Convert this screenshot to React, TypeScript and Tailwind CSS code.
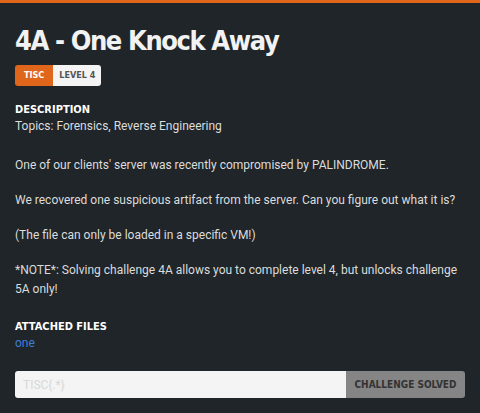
import React from "react";

const heading = "font-['DejaVu_Sans_Condensed','Liberation_Sans',sans-serif]";

export default function App() {
  return (
    <div className="min-h-[413px] w-[480px] bg-[#1f2529] text-[#e6e6e6]">
      <div className="h-[3px] bg-[#e0661c]" />
      <div className="px-[15px] pt-[20px]">
        <h1 className={`${heading} text-[27px] font-bold leading-[36px] tracking-[-1.4px] text-[#f2f2f2]`}>
          4A - One Knock Away
        </h1>

        <div className={`${heading} mt-[6px] flex h-[21px] w-fit overflow-hidden rounded-[3px] text-[9px] font-bold`}>
          <span className="flex items-center bg-[#e0661c] px-[9px] text-white">TISC</span>
          <span className="flex items-center bg-[#f4f4f4] px-[6px] text-[#555]">LEVEL 4</span>
        </div>

        <h2 className={`${heading} mt-[17px] text-[11px] font-bold leading-[14px] text-white`}>DESCRIPTION</h2>
        <div className="font-['Roboto',sans-serif] text-[12px] leading-[19px] text-[#dcdcdc]">
          <p>Topics: Forensics, Reverse Engineering</p>
          <p className="mt-[20px]">One of our clients' server was recently compromised by PALINDROME.</p>
          <p className="mt-[16px]">We recovered one suspicious artifact from the server. Can you figure out what it is?</p>
          <p className="mt-[16px]">(The file can only be loaded in a specific VM!)</p>
          <p className="mt-[16px]">
            *NOTE*: Solving challenge 4A allows you to complete level 4, but unlocks challenge 5A only!
          </p>
        </div>

        <h2 className={`${heading} mt-[21px] text-[11px] font-bold leading-[14px] text-white`}>ATTACHED FILES</h2>
        <a href="#" className="block font-['Roboto',sans-serif] text-[12px] leading-[19px] text-[#3d7fd6]">one</a>

        <div className="mt-[18px] flex h-[27px] overflow-hidden rounded-[3px]">
          <input
            placeholder="TISC{.*}"
            className="min-w-0 flex-1 bg-[#f4f4f4] px-[8px] font-['Roboto',sans-serif] text-[12px] text-[#333] outline-none placeholder:text-[#d8d8d8]"
          />
          <button className={`${heading} w-[119px] bg-[#858585] text-[10px] font-bold text-[#333]`}>
            CHALLENGE SOLVED
          </button>
        </div>
      </div>
    </div>
  );
}
